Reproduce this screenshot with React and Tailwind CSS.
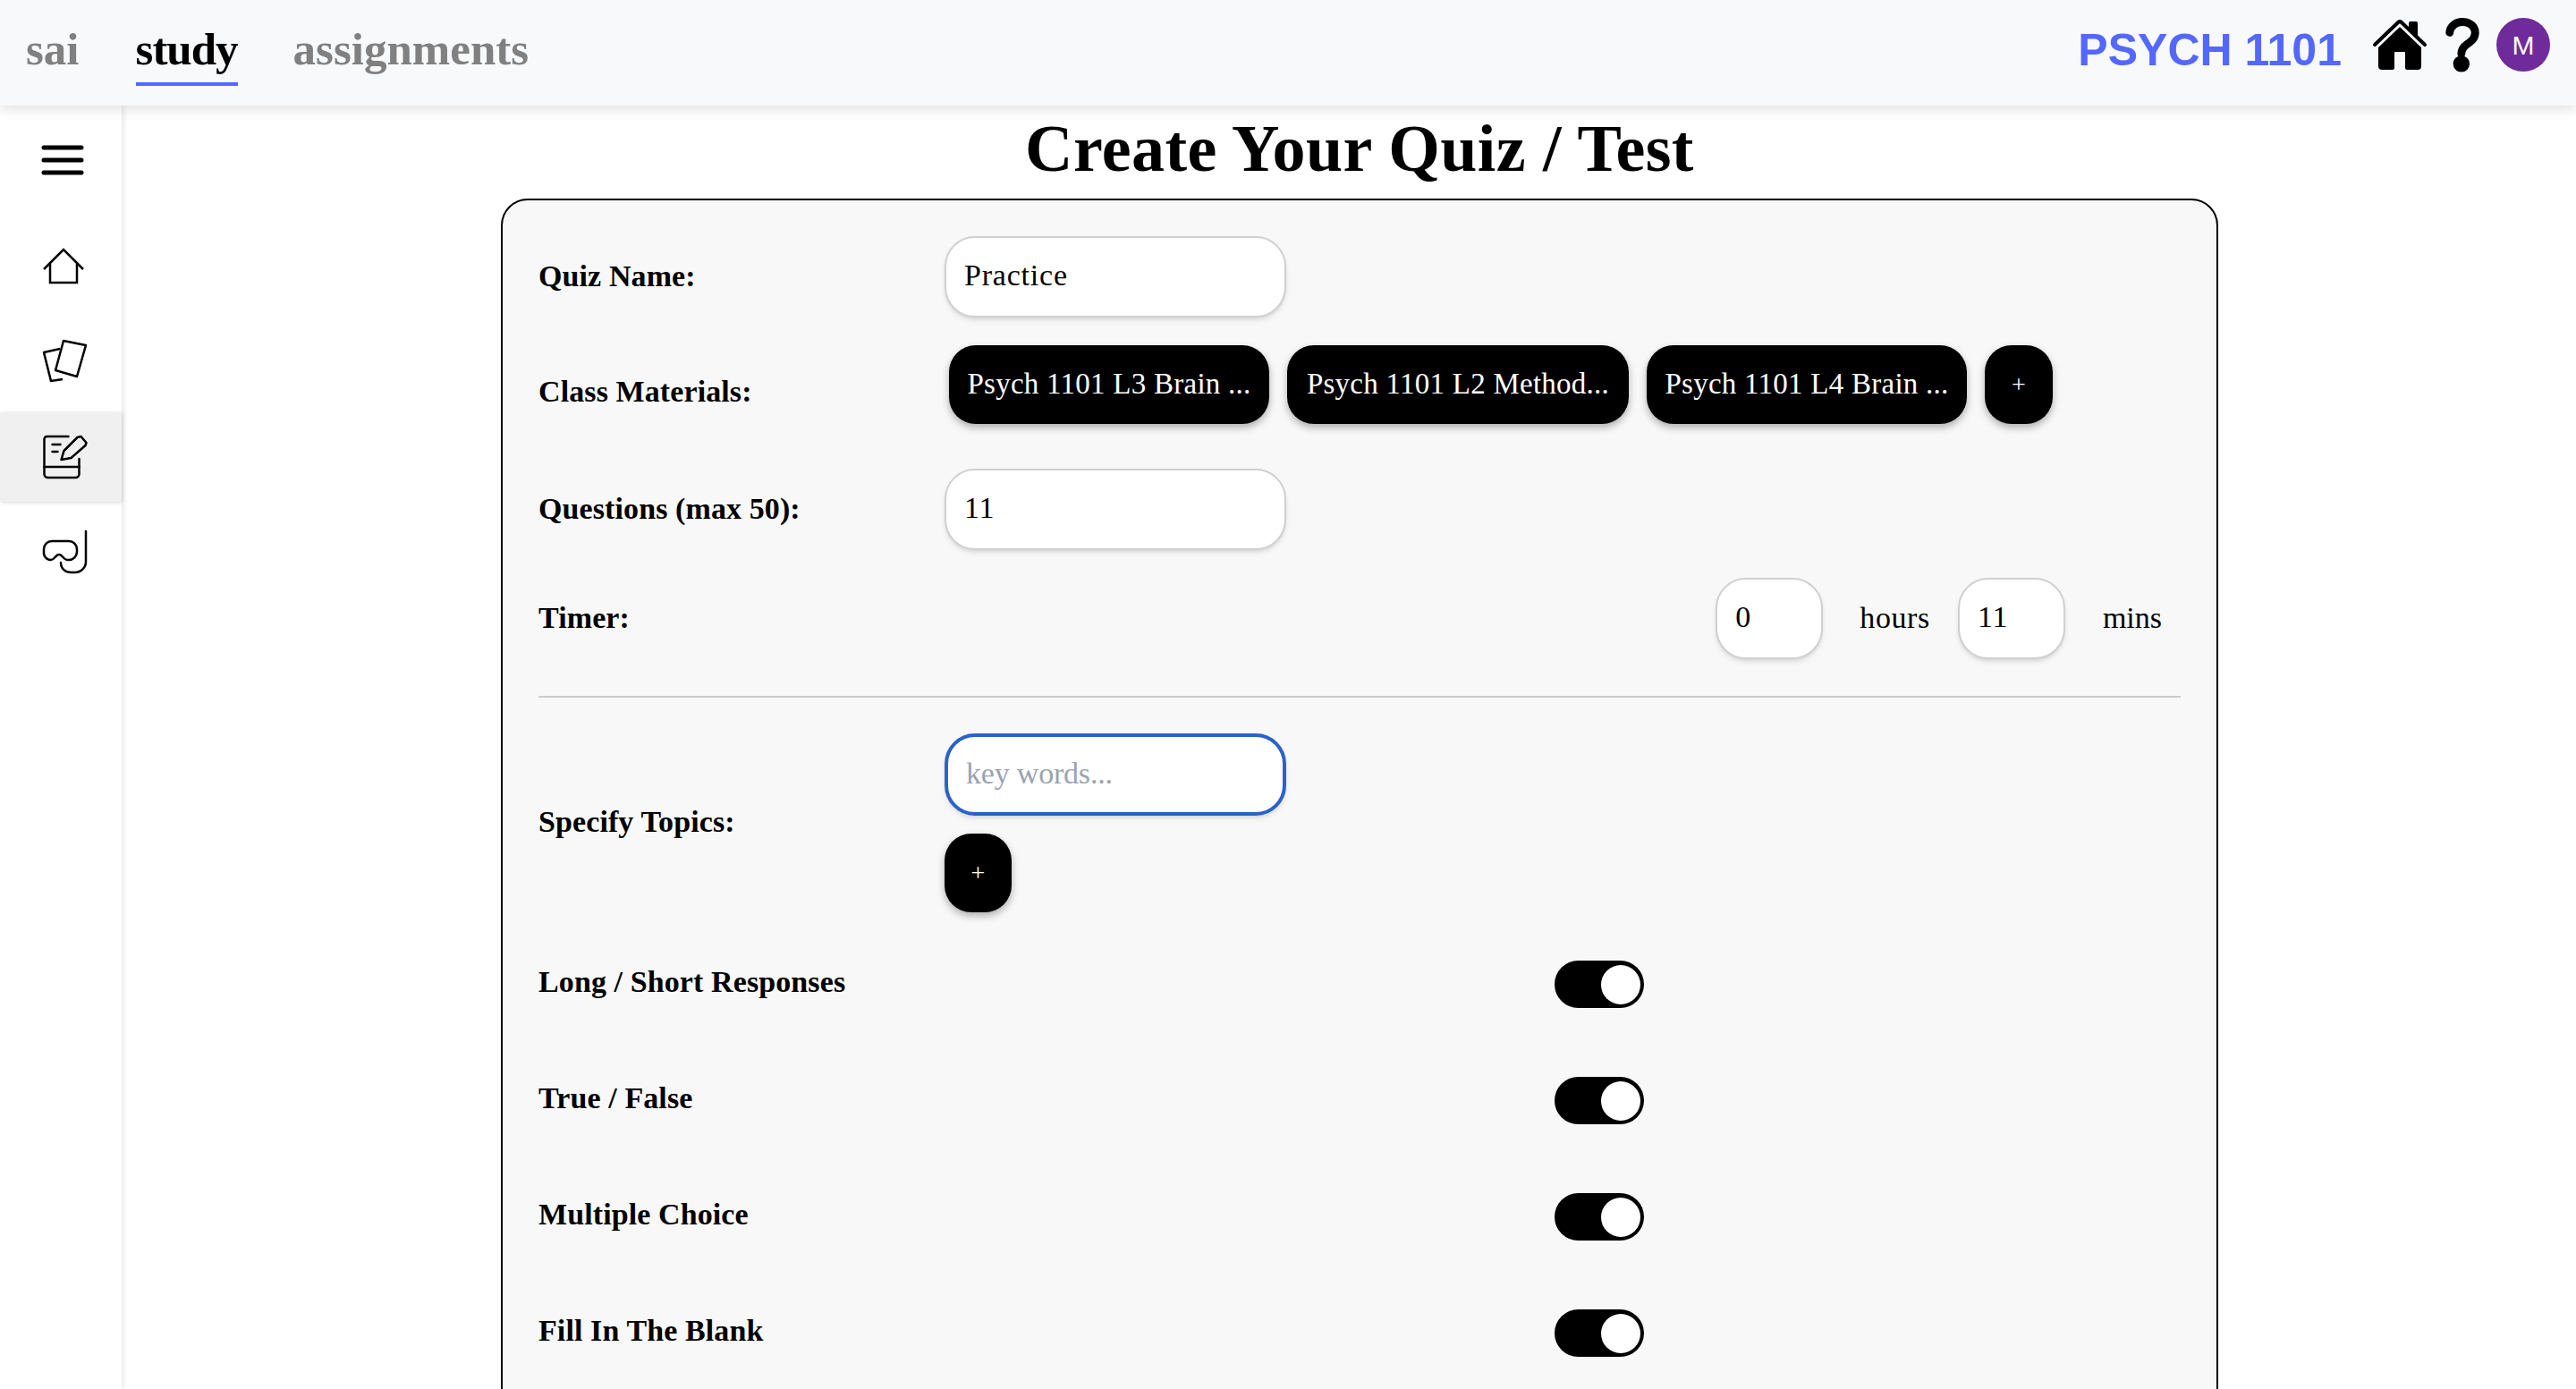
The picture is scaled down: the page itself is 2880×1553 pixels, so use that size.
import React from "react";
import { IoHome, IoHelp } from "react-icons/io5";

const serif = "font-['Liberation_Serif',serif]";

const MenuIcon = () => (
  <svg width="48" height="36" viewBox="0 0 48 36" fill="none" stroke="#000" strokeWidth="5" strokeLinecap="round">
    <path d="M3 4H45M3 18H45M3 32H45" />
  </svg>
);

const HomeIcon = () => (
  <svg width="56" height="54" viewBox="0 0 56 52" fill="none" stroke="#000" strokeWidth="2.5">
    <path d="M6 29L28 7L50 29" />
    <path d="M13 23V44H43V23" />
  </svg>
);

const CardsIcon = () => (
  <svg width="56" height="54" viewBox="-2 0 56 52" fill="none" stroke="#000" strokeWidth="2.5" strokeLinejoin="round">
    <path d="M26 2L51 7L41 42L17 35Z" />
    <path d="M22 11L4 15L12 47L25 45" />
  </svg>
);

const NoteIcon = () => (
  <svg width="56" height="54" viewBox="-2.5 0 56 52" fill="none" stroke="#000" strokeWidth="2.5" strokeLinecap="round" strokeLinejoin="round">
    <path d="M31 3H7a3 3 0 0 0-3 3V45a4 4 0 0 0 4 4H39a4 4 0 0 0 4-4V28" />
    <path d="M4 37H43" />
    <path d="M13 12H22M13 20H19" />
    <path d="M23 29L26 19L41 4L45 3L51 10L50 13L34 27Z" />
  </svg>
);

const SnorkelIcon = () => (
  <svg width="56" height="54" viewBox="-3 0 56 52" fill="none" stroke="#000" strokeWidth="2.5" strokeLinecap="round">
    <path d="M12 13H31a9 9 0 0 1 9 9v3a9 9 0 0 1-9 9h-2c-4 0-5-6-9-6s-5 6-9 6a8 8 0 0 1-8-9v-3a9 9 0 0 1 9-9Z" />
    <path d="M50 2V36a12 12 0 0 1-12 12h-4c-7 0-12-4-12-11" />
  </svg>
);

const TextField = ({ value, placeholder, className }) => (
  <input
    readOnly
    value={value}
    placeholder={placeholder}
    className={`bg-white rounded-[34px] border-2 border-[#d0d0d0] shadow-md outline-none px-[20px] pb-[3px] text-[34px] tracking-[0.8px] text-black placeholder:text-[#9ca3af] placeholder:tracking-[-0.2px] ${serif} ${className}`}
  />
);

const Pill = ({ label, className }) => (
  <button className={`h-[88px] shrink-0 rounded-[30px] bg-black text-white text-[33px] tracking-[0.25px] shadow-[0_4px_8px_rgba(0,0,0,0.3)] whitespace-nowrap flex items-center justify-center ${className}`}>
    {label}
  </button>
);

const Label = ({ children, className }) => (
  <div className={`text-[34px] font-bold tracking-[0.1px] text-black whitespace-nowrap ${className}`}>{children}</div>
);

const Toggle = () => (
  <div className="w-[100px] h-[53px] rounded-full bg-black flex items-center justify-end pr-[4px]">
    <div className="w-[44px] h-[44px] rounded-full bg-white"></div>
  </div>
);

const ToggleRow = ({ label }) => (
  <div className="flex items-center h-[53px] mt-[77px] first:mt-[54px]">
    <Label className="w-[1136px] pb-[6px]">{label}</Label>
    <Toggle />
  </div>
);

const SideItem = ({ active, children }) => (
  <div className={`h-[100px] pl-[6px] flex items-center justify-center ${active ? "bg-[#f0f0f0] shadow-[1px_1px_4px_rgba(0,0,0,0.15)]" : ""}`}>
    {children}
  </div>
);

const App = () => {
  return (
    <div className={`w-[2880px] h-[1553px] overflow-hidden bg-white flex flex-col ${serif}`}>
      <header className="relative z-20 h-[118px] shrink-0 bg-[#f8f9fb] shadow-[0_4px_14px_rgba(0,0,0,0.12)] flex items-start justify-between pl-[29px] pr-[29px]">
        <nav className="flex pt-[27px] text-[51px] font-bold leading-[57px] text-[#808080]">
          <span>sai</span>
          <span className="h-[69px] ml-[63px] border-b-4 border-[#5468ff] text-black tracking-[-1px]">study</span>
          <span className="ml-[62px]">assignments</span>
        </nav>
        <div className="flex items-center h-[100px]">
          <span className="font-['Liberation_Sans',sans-serif] font-bold text-[50px] pt-[12px] text-[#5468ff] mr-[33px]">
            PSYCH 1101
          </span>
          <IoHome size={64} className="text-black" />
          <IoHelp size={76} className="text-black mr-[0px] ml-[0px] [&_*]:stroke-[60]" />
          <div className="w-[60px] h-[60px] rounded-full bg-[#6f2a9b] text-white flex items-center justify-center font-['Liberation_Sans',sans-serif] text-[30px]">
            M
          </div>
        </div>
      </header>

      <div className="flex flex-1 min-h-0">
        <aside className="relative z-10 w-[136px] shrink-0 bg-white shadow-[2px_0_6px_rgba(0,0,0,0.1)] flex flex-col">
          <div className="h-[130px] pb-[8px] pl-[4px] flex items-center justify-center">
            <MenuIcon />
          </div>
          <div className="flex flex-col gap-[6.5px]">
            <SideItem><HomeIcon /></SideItem>
            <SideItem><CardsIcon /></SideItem>
            <SideItem active><NoteIcon /></SideItem>
            <SideItem><SnorkelIcon /></SideItem>
          </div>
        </aside>

        <main className="flex-1 min-w-0 pl-[24px] flex flex-col items-center">
          <h1 className="h-[104px] pb-[7px] shrink-0 flex items-center text-[74px] font-bold tracking-[0.4px] text-black">
            Create Your Quiz / Test
          </h1>
          <div className="w-[1920px] shrink-0 rounded-[30px] border-2 border-black bg-[#f8f8f8] px-[40px] pt-[40px] pb-[300px]">
            <div className="flex items-center h-[91px]">
              <Label className="w-[454px] pb-[3px]">Quiz Name:</Label>
              <TextField value="Practice" className="w-[382px] h-[91px]" />
            </div>

            <div className="flex items-center h-[88px] mt-[31px]">
              <Label className="w-[459px] pt-[15px]">Class Materials:</Label>
              <div className="flex gap-[20px]">
                <Pill label="Psych 1101 L3 Brain ..." className="w-[358px]" />
                <Pill label="Psych 1101 L2 Method..." className="w-[382px]" />
                <Pill label="Psych 1101 L4 Brain ..." className="w-[358px]" />
                <Pill label="+" className="w-[76px] !text-[28px]" />
              </div>
            </div>

            <div className="flex items-center h-[91px] mt-[50px]">
              <Label className="w-[454px] pb-[3px]">Questions (max 50):</Label>
              <TextField value="11" className="w-[382px] h-[91px]" />
            </div>

            <div className="flex items-center justify-between h-[91px] mt-[31px] pr-[21px]">
              <Label className="pb-[3px]">Timer:</Label>
              <div className="flex items-center text-[34px] text-black">
                <TextField value="0" className="w-[120px] h-[91px]" />
                <span className="ml-[41px] mr-[31px] pb-[3px] tracking-[0.6px]">hours</span>
                <TextField value="11" className="w-[120px] h-[91px]" />
                <span className="ml-[42px] pb-[3px]">mins</span>
              </div>
            </div>

            <div className="h-[2px] bg-[#cccccc] mt-[41px]"></div>

            <div className="flex items-center h-[200px] mt-[40px]">
              <Label className="w-[454px] pb-[4px]">Specify Topics:</Label>
              <div className="flex flex-col items-start gap-[20px]">
                <TextField
                  value=""
                  placeholder="key words..."
                  className="w-[382px] h-[92px] !border-[4px] !border-[#2b62c9]"
                />
                <Pill label="+" className="w-[75px] !text-[28px]" />
              </div>
            </div>

            <div>
              <ToggleRow label="Long / Short Responses" />
              <ToggleRow label="True / False" />
              <ToggleRow label="Multiple Choice" />
              <ToggleRow label="Fill In The Blank" />
            </div>
          </div>
        </main>
      </div>
    </div>
  );
};

export default App;
